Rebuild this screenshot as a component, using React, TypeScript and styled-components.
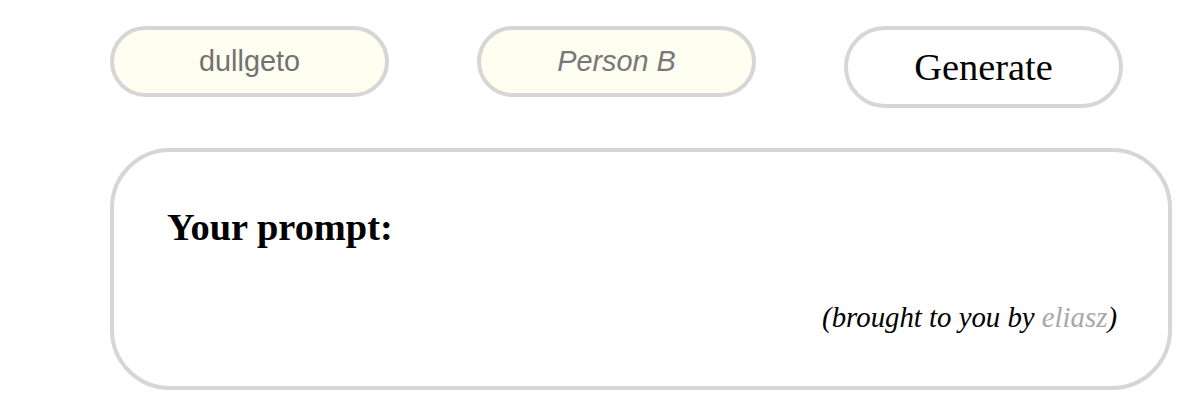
import React from "react";
import styled, { createGlobalStyle } from "styled-components";

const GlobalStyle = createGlobalStyle`
  html, body {
    margin: 0;
    padding: 0;
    background: #ffffff;
  }
  body {
    font-family: "Liberation Serif", "Times New Roman", serif;
  }
`;

const Page = styled.div`
  padding: 26px 0 0 110px;
  box-sizing: border-box;
  width: 1200px;
`;

const Controls = styled.div`
  display: flex;
  align-items: flex-start;
  gap: 88px;
`;

const NameInput = styled.input`
  box-sizing: border-box;
  width: 279px;
  height: 71px;
  margin: 0;
  padding: 0 20px;
  border: 4px solid #d6d6d6;
  border-radius: 999px;
  background: #fefef1;
  color: #727272;
  font-family: "Liberation Sans", Arial, sans-serif;
  font-size: 28.8px;
  text-align: center;
  outline: none;

  &::placeholder {
    color: #787878;
    font-style: italic;
    opacity: 1;
  }
`;

const GenerateButton = styled.button`
  box-sizing: border-box;
  width: 279px;
  height: 82px;
  margin: 0;
  padding: 0;
  border: 4px solid #d6d6d6;
  border-radius: 999px;
  background: #ffffff;
  color: #000000;
  font-family: "Liberation Serif", "Times New Roman", serif;
  font-size: 38.4px;
  cursor: pointer;
`;

const Card = styled.section`
  box-sizing: border-box;
  width: 1062px;
  height: 242px;
  margin-top: 40px;
  padding: 53px 51px 0 53px;
  border: 4px solid #d6d6d6;
  border-radius: 60px;
  display: flex;
  flex-direction: column;
`;

const Heading = styled.h2`
  margin: 0;
  font-family: "Liberation Serif", "Times New Roman", serif;
  font-size: 38.4px;
  font-weight: bold;
  color: #000000;
`;

const Credit = styled.p`
  margin: 52px 0 0;
  text-align: right;
  font-family: "Liberation Serif", "Times New Roman", serif;
  font-style: italic;
  font-size: 28.8px;
  color: #000000;
`;

const Author = styled.a`
  color: #a8a8a8;
  text-decoration: none;
`;

export default function App() {
  return (
    <>
      <GlobalStyle />
      <Page>
        <Controls>
          <NameInput type="text" defaultValue="dullgeto" />
          <NameInput type="text" placeholder="Person B" />
          <GenerateButton type="button">Generate</GenerateButton>
        </Controls>
        <Card>
          <Heading>Your prompt:</Heading>
          <Credit>
            (brought to you by <Author href="#">eliasz</Author>)
          </Credit>
        </Card>
      </Page>
    </>
  );
}
